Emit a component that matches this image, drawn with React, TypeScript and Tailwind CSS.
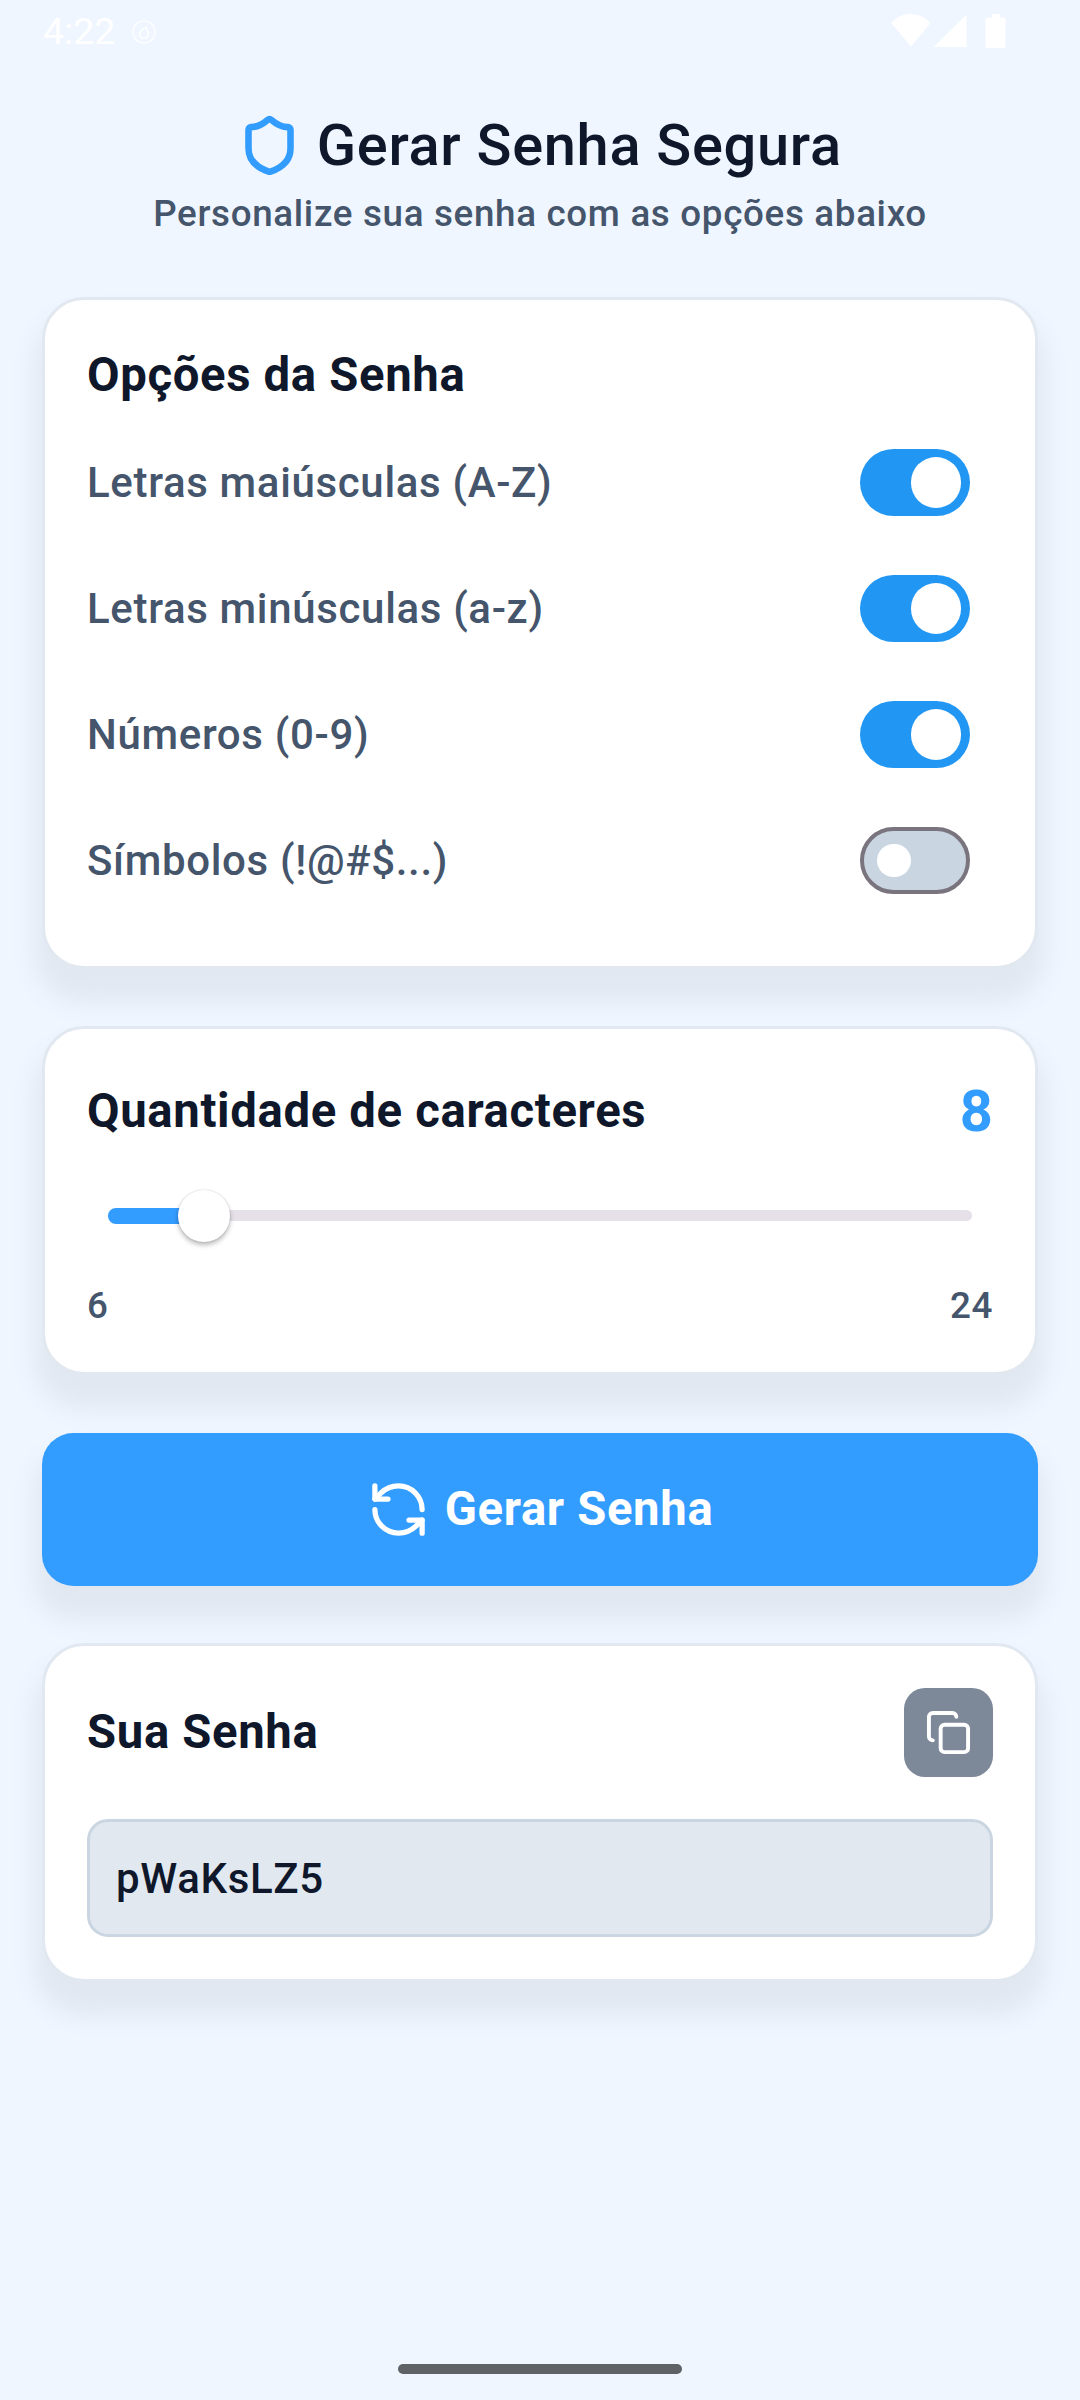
import React from "react";

const options = [
  { label: "Letras maiúsculas (A-Z)", on: true },
  { label: "Letras minúsculas (a-z)", on: true },
  { label: "Números (0-9)", on: true },
  { label: "Símbolos (!@#$...)", on: false },
];

const cardClass =
  "rounded-[42px] border-[3px] border-[#e2e8f0] bg-white px-[42px] shadow-[0_26px_24px_8px_#e1e8f2]";
const headingClass =
  "text-[47.25px] leading-[60px] font-bold tracking-[0.66px] text-[#0f172b]";

function Toggle({ on }: { on: boolean }) {
  return on ? (
    <div className="mr-[23.5px] mb-px flex h-[67.2px] w-[109.2px] items-center justify-end rounded-full bg-[#2196f3] pr-[8.4px]">
      <div className="size-[50.4px] rounded-full bg-white" />
    </div>
  ) : (
    <div className="mr-[23.5px] mb-px flex h-[67.2px] w-[109.2px] items-center rounded-full border-4 border-[#79747e] bg-[#cad5e2] pl-[12.8px]">
      <div className="size-[33.6px] rounded-full bg-white" />
    </div>
  );
}

function StatusBar() {
  return (
    <div className="flex h-[63px] items-start justify-between pr-[73.5px] pl-[43px] text-white">
      <div className="flex items-center gap-[17px] pt-[9px]">
        <span className="text-[37.5px] leading-[44px]">4:22</span>
        <svg width="24" height="24" viewBox="0 0 24 24" fill="none" stroke="currentColor" className="mt-[1px]">
          <circle cx="12" cy="12" r="11" strokeWidth="1.2" />
          <path d="M14.200 6.800C13.600 8 9.500 9 8 12.300a4.300 4.300 0 1 0 8.200 1.600C16.400 11.500 14.300 9.600 14.200 6.800Z" strokeWidth="1.400" strokeLinejoin="round" />
        </svg>
      </div>
      <svg width="116" height="36" viewBox="0 0 116 36" fill="currentColor" className="mt-[14px]">
        <path d="M0 9C11-3 28-3 39.500 9L20 32.500Z" />
        <path d="M42.500 33 75.500 .5V33Z" />
        <path d="M101 0h8V3.500h3.500q2 0 2 2v26.500q0 2-2 2h-16q-2 0-2-2V5.500q0-2 2-2h4.500Z" />
      </svg>
    </div>
  );
}

export default function App() {
  return (
    <div className="flex h-[2400px] w-[1080px] flex-col bg-[#eff6ff] font-[Roboto,sans-serif]">
      <StatusBar />
      <header className="flex h-[233.600px] flex-col items-center pt-[46px]">
        <div className="flex items-center gap-[15.500px]">
          <svg width="63" height="63" viewBox="0 0 24 24" fill="none" stroke="#339cff" strokeWidth="2.5" strokeLinecap="round" strokeLinejoin="round" className="-mt-px">
            <path d="M20 13c0 5-3.500 7.500-7.660 8.950a1 1 0 0 1-.67-.01C7.500 20.500 4 18 4 13V6a1 1 0 0 1 1-1c2 0 4.500-1.200 6.240-2.720a1.170 1.170 0 0 1 1.520 0C14.510 3.810 17 5 19 5a1 1 0 0 1 1 1z" />
          </svg>
          <h1 className="text-[57.75px] leading-[73px] font-medium tracking-[0.7px] text-[#0f172b]">Gerar Senha Segura</h1>
        </div>
        <p className="mt-[7px] text-[36.75px] leading-[50px] font-medium tracking-[0.68px] text-[#45556c]">
          Personalize sua senha com as opções abaixo
        </p>
      </header>
      <main className="flex flex-col gap-[57.75px] px-[42px]">
        <section className={`${cardClass} h-[672px] pt-[45px]`}>
          <h2 className={headingClass}>Opções da Senha</h2>
          <div className="mt-[15.500px]">
            {options.map((option) => (
              <div key={option.label} className="flex h-[126px] items-center justify-between">
                <span className="text-[42px] leading-[56px] font-medium tracking-[0.66px] text-[#45556c]">{option.label}</span>
                <Toggle on={option.on} />
              </div>
            ))}
          </div>
        </section>
        <section className={`${cardClass} h-[349px] pt-[42px]`}>
          <div className="flex h-[80px] items-center justify-between">
            <h2 className={headingClass}>Quantidade de caracteres</h2>
            <span className="text-[57.75px] leading-[80px] font-bold text-[#339cff]">8</span>
          </div>
          <div className="relative mx-[21px] mt-[38px] flex h-[53px] items-center">
            <div className="h-[11px] w-full rounded-full bg-[#e6e0e9]" />
            <div className="absolute left-0 h-[16px] w-[96px] rounded-full bg-[#339cff]" />
            <div className="absolute left-[69.500px] size-[52.500px] rounded-full bg-white shadow-[0_3px_5px_rgba(0,0,0,0.28),0_0_2px_rgba(0,0,0,0.15)]" />
          </div>
          <div className="mt-[39px] flex justify-between text-[36.75px] leading-[50px] font-medium tracking-[0.66px] text-[#45556c]">
            <span>6</span>
            <span>24</span>
          </div>
        </section>
        <button className="flex h-[152.500px] shrink-0 items-center justify-center gap-[15px] rounded-[31.500px] bg-[#339cff] shadow-[0_26px_24px_8px_#e1e8f2]">
          <svg width="63" height="63" viewBox="0 0 24 24" fill="none" stroke="white" strokeWidth="2" strokeLinecap="round" strokeLinejoin="round">
            <path d="M21 12a9 9 0 0 0-9-9 9.750 9.750 0 0 0-6.740 2.740L3 8" />
            <path d="M3 3v5h5" />
            <path d="M3 12a9 9 0 0 0 9 9 9.750 9.750 0 0 0 6.740-2.740L21 16" />
            <path d="M16 16h5v5" />
          </svg>
          <span className="text-[47.25px] leading-[60px] font-bold tracking-[0.66px] text-white">Gerar Senha</span>
        </button>
        <section className={`${cardClass} h-[338.600px] pt-[41px]`}>
          <div className="flex h-[90px] items-center justify-between">
            <h2 className={headingClass}>Sua Senha</h2>
            <div className="flex size-[89.500px] items-center justify-center rounded-[21px] bg-[#7d8899]">
              <svg width="47" height="47" viewBox="0 0 24 24" fill="none" stroke="white" strokeWidth="2" strokeLinecap="round" strokeLinejoin="round">
                <rect width="14" height="14" x="8" y="8" rx="2" />
                <path d="M4 16c-1.100 0-2-.9-2-2V4c0-1.100.9-2 2-2h10c1.100 0 2 .9 2 2" />
              </svg>
            </div>
          </div>
          <div className="mt-[42px] flex h-[118px] items-center rounded-[21px] border-[3px] border-[#cad5e2] bg-[#e2e8f0] px-[26px] text-[42px] font-medium tracking-[0.66px] text-[#0f172b]">
            pWaKsLZ5
          </div>
        </section>
      </main>
      <div className="mt-auto mb-[26px] h-[10px] w-[284px] self-center rounded-full bg-[#5f6266]" />
    </div>
  );
}
